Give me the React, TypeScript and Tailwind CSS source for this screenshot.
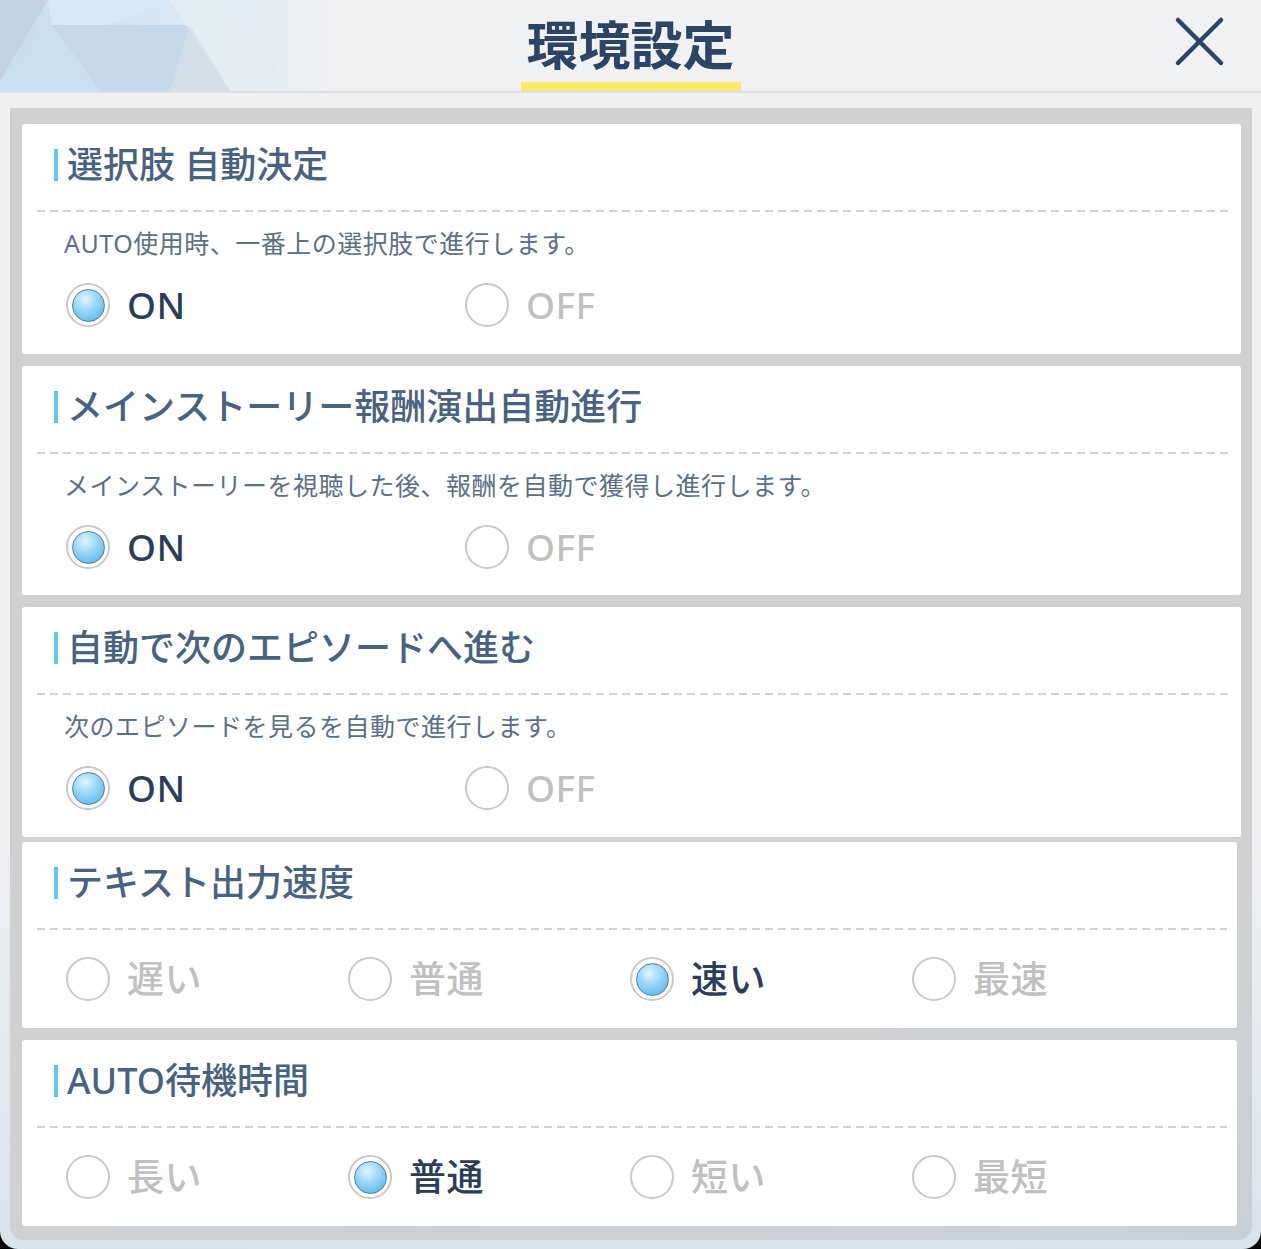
import React from 'react';

type Opt = { label: string; on?: boolean };

interface CardProps {
    title: string;
    desc?: string;
    options: Opt[];
    colWidth: string;
    className: string;
}

function Radio({ label, on, colWidth }: Opt & { colWidth: string }) {
    return (
        <div className={`flex items-center gap-[17px] ${colWidth}`}>
            <div className="w-[44px] h-[44px] rounded-full border-2 border-[#c9c9c9] bg-white flex items-center justify-center shrink-0">
                {on && (
                    <div className="w-[33px] h-[33px] rounded-full border-[1.5px] border-[#4d7ba3] bg-[radial-gradient(circle_at_40%_30%,#e2f6ff_0%,#9ad8f8_40%,#4aaee6_100%)]" />
                )}
            </div>
            <span
                className={`text-[37px] leading-[44px] font-medium tracking-[0.5px] ${on ? 'text-[#2b3e57]' : 'text-[#c0c0c0]'}`}
            >
                {label}
            </span>
        </div>
    );
}

function Card({ title, desc, options, colWidth, className }: CardProps) {
    return (
        <div className={`bg-white rounded-[3px] flex flex-col shrink-0 ${className}`}>
            <div className="flex items-center pl-[32px] mt-[22px] h-[38px]">
                <div className="w-[4px] h-[32px] bg-[#5cc6ee]" />
                <span className="ml-[9px] text-[36px] leading-[38px] font-medium text-[#48627f] whitespace-pre">
                    {title}
                </span>
            </div>
            <div className="ml-[15px] mr-[10px] mt-[26px] h-[2px] bg-[repeating-linear-gradient(90deg,#ced3d8_0px,#ced3d8_8px,transparent_8px,transparent_13px)]" />
            {desc && (
                <p className="ml-[42px] mt-[15px] text-[25px] leading-[32px] tracking-[0.5px] text-[#5b7087]">
                    {desc}
                </p>
            )}
            <div className={`flex pl-[44px] ${desc ? 'mt-[24px]' : 'mt-[27px]'}`}>
                {options.map((o) => (
                    <Radio key={o.label} {...o} colWidth={colWidth} />
                ))}
            </div>
        </div>
    );
}

export default function App() {
    return (
        <div className="w-[1261px] h-[1249px] bg-black font-['Noto_Sans','Noto_Sans_CJK_JP',sans-serif]">
            <div className="h-full flex flex-col rounded-b-[18px] overflow-hidden bg-[linear-gradient(180deg,#eff0f2_0%,#eff0f2_66%,#d9e3ec_100%)]">
                {/* header */}
                <div className="relative h-[93px] shrink-0 bg-[#eff1f3] border-b-2 border-[#dcdee1] flex justify-center pt-[13px]">
                    <svg className="absolute left-0 top-0" width="330" height="91" viewBox="0 0 330 91">
                        <defs>
                            <linearGradient id="fade" x1="0" x2="1" y1="0" y2="0">
                                <stop offset="0" stopColor="#c8dcec" />
                                <stop offset="0.55" stopColor="#d8e8f5" />
                                <stop offset="1" stopColor="#eff1f3" />
                            </linearGradient>
                        </defs>
                        <rect x="0" y="0" width="330" height="91" fill="url(#fade)" />
                        <polygon points="0,0 48,0 0,80" fill="#c2d2e0" />
                        <polygon points="48,0 170,0 110,25 52,25" fill="#d6e9f8" />
                        <polygon points="52,25 190,25 230,91 100,91" fill="#c6d9ea" />
                        <polygon points="0,80 48,25 100,91 0,91" fill="#cadff0" />
                        <polygon points="170,0 230,0 290,91 230,91" fill="#e4ecf3" opacity="0.8" />
                        <polygon points="190,25 230,91 170,91" fill="#d9e0e7" opacity="0.7" />
                    </svg>
                    <div className="relative flex flex-col items-center">
                        <h1 className="text-[52px] leading-[60px] font-bold text-[#2d4565] font-['Noto_Sans_CJK_JP',sans-serif]">
                            環境設定
                        </h1>
                        <div className="mt-[9px] w-[220px] h-[9px] bg-[#fbe96b]" />
                    </div>
                    <svg
                        className="absolute left-[1172px] top-[14px]"
                        width="56"
                        height="56"
                        viewBox="0 0 56 56"
                        fill="none"
                        stroke="#2d4565"
                        strokeWidth="4.5"
                        strokeLinecap="round"
                    >
                        <line x1="6" y1="6" x2="49" y2="49" />
                        <line x1="49" y1="6" x2="6" y2="49" />
                    </svg>
                </div>

                {/* body */}
                <div className="flex-1 pl-[10px] pr-[9px] pt-[15px] pb-[9px]">
                    <div className="h-full rounded-b-[14px] bg-[linear-gradient(165deg,#d1d1d1_0%,#d1d1d1_70%,#c8d0d7_100%)] pt-[16px] pl-[12px] pr-[11px] flex flex-col">
                        <Card
                            className="h-[230px]"
                            title="選択肢 自動決定"
                            desc="AUTO使用時、一番上の選択肢で進行します。"
                            colWidth="w-[399px]"
                            options={[{ label: 'ON', on: true }, { label: 'OFF' }]}
                        />
                        <Card
                            className="h-[229px] mt-[12px]"
                            title="メインストーリー報酬演出自動進行"
                            desc="メインストーリーを視聴した後、報酬を自動で獲得し進行します。"
                            colWidth="w-[399px]"
                            options={[{ label: 'ON', on: true }, { label: 'OFF' }]}
                        />
                        <Card
                            className="h-[230px] mt-[12px]"
                            title="自動で次のエピソードへ進む"
                            desc="次のエピソードを見るを自動で進行します。"
                            colWidth="w-[399px]"
                            options={[{ label: 'ON', on: true }, { label: 'OFF' }]}
                        />
                        <Card
                            className="h-[186px] mt-[5px] mr-[4px]"
                            title="テキスト出力速度"
                            colWidth="w-[282px]"
                            options={[
                                { label: '遅い' },
                                { label: '普通' },
                                { label: '速い', on: true },
                                { label: '最速' },
                            ]}
                        />
                        <Card
                            className="h-[186px] mt-[12px] mr-[4px]"
                            title="AUTO待機時間"
                            colWidth="w-[282px]"
                            options={[
                                { label: '長い' },
                                { label: '普通', on: true },
                                { label: '短い' },
                                { label: '最短' },
                            ]}
                        />
                    </div>
                </div>
            </div>
        </div>
    );
}
